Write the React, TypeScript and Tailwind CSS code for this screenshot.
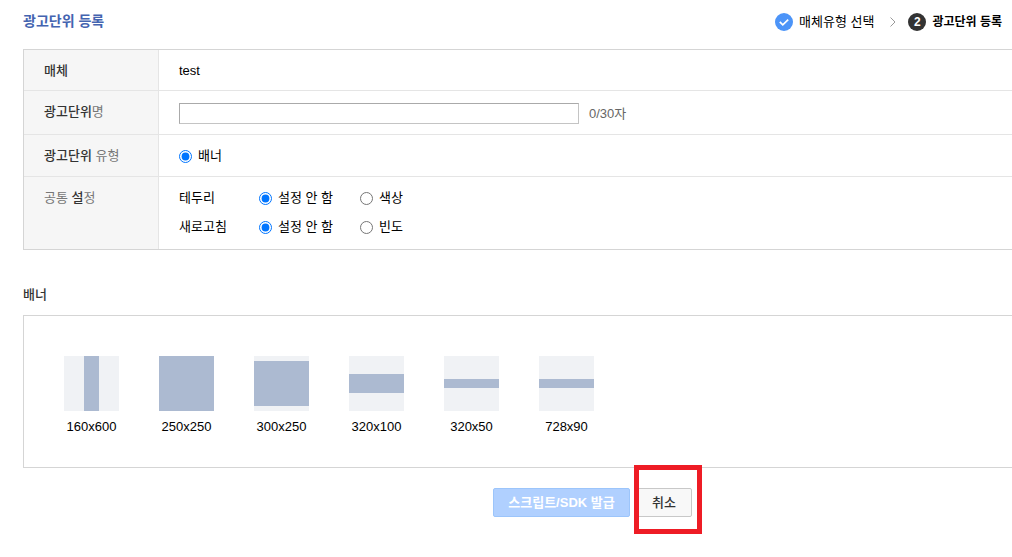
import React from 'react';

interface BannerSize {
  label: string;
  shape: string;
}

const BANNER_SIZES: BannerSize[] = [
  { label: '160x600', shape: 'w-[15px] h-full ml-5' },
  { label: '250x250', shape: 'w-full h-full' },
  { label: '300x250', shape: 'w-full h-[45px] mt-[5px]' },
  { label: '320x100', shape: 'w-full h-[19px] mt-[18px]' },
  { label: '320x50', shape: 'w-full h-[9px] mt-[23px]' },
  { label: '728x90', shape: 'w-full h-[9px] mt-[23px]' },
];

const COMMON_SETTINGS = [
  { id: 'border', title: '테두리', custom: '색상' },
  { id: 'refresh', title: '새로고침', custom: '빈도' },
];

const Row: React.FC<{ label: React.ReactNode; last?: boolean; children: React.ReactNode }> = ({ label, last, children }) => (
  <tr>
    <th
      scope="row"
      className={`w-[135px] border-r border-[#e5e5e5] bg-[#f6f6f6] pt-3 pl-5 text-left align-top font-medium text-[#333] ${last ? '' : 'border-b'}`}
    >
      {label}
    </th>
    <td className={`border-[#e5e5e5] pl-5 align-top ${last ? '' : 'border-b'}`}>{children}</td>
  </tr>
);

const Radio: React.FC<{ name: string; label: string; checked?: boolean; className?: string }> = ({ name, label, checked, className }) => (
  <label className={`flex items-center gap-[6px] ${className ?? ''}`}>
    <input type="radio" name={name} defaultChecked={checked} className="m-0 h-[13px] w-[13px]" />
    {label}
  </label>
);

const Steps: React.FC = () => (
  <ol className="flex items-center">
    <li className="flex items-center gap-[6px]">
      <svg width="18" height="18" viewBox="0 0 18 18" aria-hidden="true">
        <circle cx="9" cy="9" r="9" fill="#4c94f8" />
        <path d="M4.8 8.8l3 3 5.4-5.2" fill="none" stroke="#fff" strokeWidth="1.7" />
      </svg>
      매체유형 선택
    </li>
    <li aria-hidden="true" className="mr-3 ml-4">
      <svg width="6" height="10" viewBox="0 0 6 10">
        <path d="M.5.5L5 5 .5 9.5" fill="none" stroke="#999" />
      </svg>
    </li>
    <li className="flex items-center gap-[6px] text-xs leading-[18px] font-bold" aria-current="step">
      <span className="flex h-[18px] w-[18px] items-center justify-center rounded-full bg-[#333] text-white">2</span>
      광고단위 등록
    </li>
  </ol>
);

export default function App() {
  return (
    <main className="bg-white pb-10 pl-[23px] font-['Liberation_Sans','Noto_Sans_CJK_KR',sans-serif] text-[13px] leading-[18px] text-black">
      <header className="flex items-end justify-between pt-3 pr-[10px]">
        <h1 className="pb-px text-sm leading-[18px] font-bold text-[#4464b0]">광고단위 등록</h1>
        <Steps />
      </header>

      <table className="mt-[18px] w-full border-separate border-spacing-0 border-y border-l border-[#d5d5d5]">
        <tbody>
          <Row label="매체">
            <p className="pt-3 pb-[10px]">test</p>
          </Row>
          <Row
            label={
              <label htmlFor="unit-name">
                광고단위<span className="font-normal text-[#777]">명</span>
              </label>
            }
          >
            <div className="flex items-center pt-3 pb-[10px]">
              <input
                id="unit-name"
                type="text"
                maxLength={30}
                className="h-[21px] w-[400px] border border-[#c4c4c4] border-t-[#aaa] border-l-[#aaa] bg-white px-1"
              />
              <span className="ml-[10px] text-[#666]">0/30자</span>
            </div>
          </Row>
          <Row
            label={
              <>
                광고단위 <span className="font-normal text-[#777]">유형</span>
              </>
            }
          >
            <div className="flex pt-3 pb-[11px]">
              <Radio name="unit-type" label="배너" checked />
            </div>
          </Row>
          <Row
            last
            label={
              <>
                <span className="font-normal text-[#777]">공통</span> 설<span className="font-normal text-[#777]">정</span>
              </>
            }
          >
            <div className="flex flex-col gap-[11px] pt-3 pb-[13px]">
              {COMMON_SETTINGS.map(setting => (
                <div key={setting.id} role="radiogroup" aria-label={setting.title} className="flex">
                  <span className="w-20">{setting.title}</span>
                  <Radio name={setting.id} label="설정 안 함" checked className="w-[101px]" />
                  <Radio name={setting.id} label={setting.custom} />
                </div>
              ))}
            </div>
          </Row>
        </tbody>
      </table>

      <h2 className="mt-9 font-medium text-[#333]">배너</h2>
      <ul className="mt-[11px] flex gap-10 border-y border-l border-[#d5d5d5] px-10 pt-10 pb-[31px]">
        {BANNER_SIZES.map(size => (
          <li key={size.label} className="flex w-[55px] flex-col items-center">
            <div className="flex h-[55px] w-full items-start bg-[#f0f2f5]">
              <div className={`bg-[#acbad1] ${size.shape}`} />
            </div>
            <span className="mt-[7px]">{size.label}</span>
          </li>
        ))}
      </ul>

      <div className="mt-5 flex justify-center gap-[6px] pl-[150px]">
        <button type="button" disabled className="h-[29px] w-[137px] rounded-[2px] border border-[#9cc5fb] bg-[#b0d0ff] font-bold text-white">
          스크립트/SDK 발급
        </button>
        <div className="relative">
          <button type="button" className="h-[29px] w-[56px] rounded-[2px] border border-[#c8c8c8] bg-[#f8f8f8] font-medium text-[#333]">
            취소
          </button>
          <div className="pointer-events-none absolute -top-[23px] -left-[2px] h-[69px] w-[68px] border-[5px] border-[#ee1c25]" />
        </div>
      </div>
    </main>
  );
}
